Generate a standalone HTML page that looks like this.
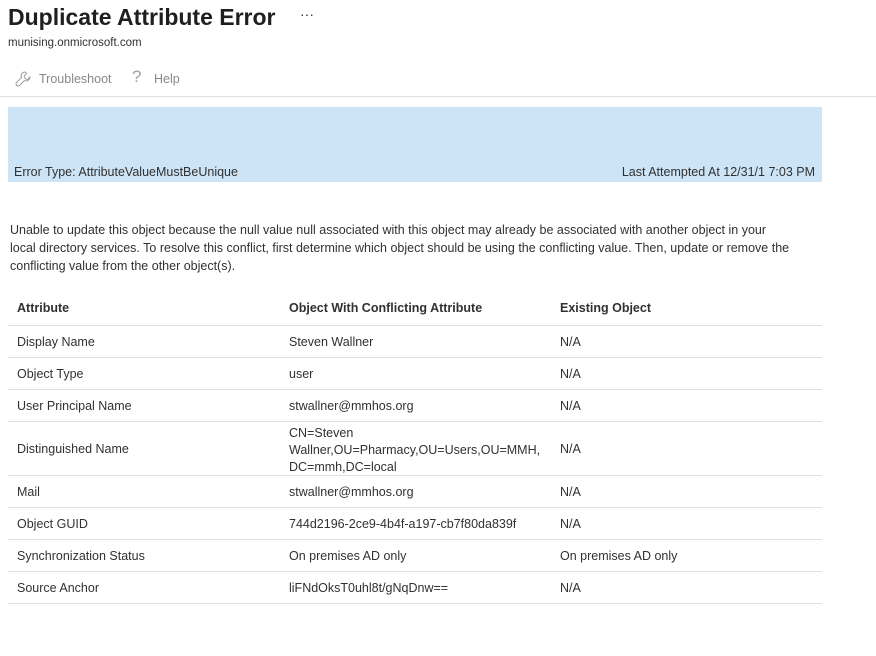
<!DOCTYPE html>
<html><head><style>
body{margin:0;width:876px;height:656px;background:#fff;font-family:"Liberation Sans",sans-serif;color:#323130;position:relative;overflow:hidden}
.a{position:absolute;white-space:nowrap}
.t{font-size:12.5px}
.line{position:absolute;left:8px;width:814px;height:1px;background:#e1dfdd}
</style></head><body>
<div class="a" style="left:8px;top:4px;font-size:23px;font-weight:600;color:#201f1e">Duplicate Attribute Error</div>
<div class="a" style="left:300px;top:6px;font-size:14px;color:#323130">···</div>
<div class="a" style="left:8px;top:37px;font-size:11.5px;color:#323130">munising.onmicrosoft.com</div>
<svg class="a" style="left:14px;top:70px" width="18" height="18" viewBox="0 0 18 18"><path d="M11 2a4 4 0 0 0-3.6 5.6L2 13l.5 2.5L5 16l5.4-5.4A4 4 0 0 0 16 7l-2.5 2.5-2.5-1-.8-2.4L12.5 3.5A4 4 0 0 0 11 2z" fill="none" stroke="#a19f9d" stroke-width="1"/></svg>
<div class="a t" style="left:39px;top:72px;color:#8a8886">Troubleshoot</div>
<div class="a" style="left:132px;top:67px;font-size:17px;color:#a19f9d">?</div>
<div class="a t" style="left:154px;top:72px;color:#8a8886">Help</div>
<div class="a" style="left:0;top:96px;width:876px;height:1px;background:#e1dfdd"></div>
<div class="a" style="left:8px;top:107px;width:814px;height:75px;background:#cce4f6"></div>
<div class="a t" style="left:14px;top:165px">Error Type: AttributeValueMustBeUnique</div>
<div class="a t" style="right:61px;top:165px">Last Attempted At 12/31/1 7:03 PM</div>
<div class="a t" style="left:10px;top:221px;line-height:18px">Unable to update this object because the null value null associated with this object may already be associated with another object in your<br>local directory services. To resolve this conflict, first determine which object should be using the conflicting value. Then, update or remove the<br>conflicting value from the other object(s).</div>
<div class="a t" style="left:17px;top:301px;font-weight:bold">Attribute</div>
<div class="a t" style="left:289px;top:301px;font-weight:bold">Object With Conflicting Attribute</div>
<div class="a t" style="left:560px;top:301px;font-weight:bold">Existing Object</div>
<div class="line" style="top:325px"></div>
<div class="a t" style="left:17px;top:335px">Display Name</div><div class="a t" style="left:289px;top:335px">Steven Wallner</div><div class="a t" style="left:560px;top:335px">N/A</div>
<div class="line" style="top:357px"></div>
<div class="a t" style="left:17px;top:367px">Object Type</div><div class="a t" style="left:289px;top:367px">user</div><div class="a t" style="left:560px;top:367px">N/A</div>
<div class="line" style="top:389px"></div>
<div class="a t" style="left:17px;top:399px">User Principal Name</div><div class="a t" style="left:289px;top:399px">stwallner@mmhos.org</div><div class="a t" style="left:560px;top:399px">N/A</div>
<div class="line" style="top:421px"></div>
<div class="a t" style="left:17px;top:442px">Distinguished Name</div><div class="a t" style="left:289px;top:425px;line-height:17px">CN=Steven<br>Wallner,OU=Pharmacy,OU=Users,OU=MMH,<br>DC=mmh,DC=local</div><div class="a t" style="left:560px;top:442px">N/A</div>
<div class="line" style="top:475px"></div>
<div class="a t" style="left:17px;top:485px">Mail</div><div class="a t" style="left:289px;top:485px">stwallner@mmhos.org</div><div class="a t" style="left:560px;top:485px">N/A</div>
<div class="line" style="top:507px"></div>
<div class="a t" style="left:17px;top:517px">Object GUID</div><div class="a t" style="left:289px;top:517px">744d2196-2ce9-4b4f-a197-cb7f80da839f</div><div class="a t" style="left:560px;top:517px">N/A</div>
<div class="line" style="top:539px"></div>
<div class="a t" style="left:17px;top:549px">Synchronization Status</div><div class="a t" style="left:289px;top:549px">On premises AD only</div><div class="a t" style="left:560px;top:549px">On premises AD only</div>
<div class="line" style="top:571px"></div>
<div class="a t" style="left:17px;top:581px">Source Anchor</div><div class="a t" style="left:289px;top:581px">liFNdOksT0uhl8t/gNqDnw==</div><div class="a t" style="left:560px;top:581px">N/A</div>
<div class="line" style="top:603px"></div>
</body></html>
